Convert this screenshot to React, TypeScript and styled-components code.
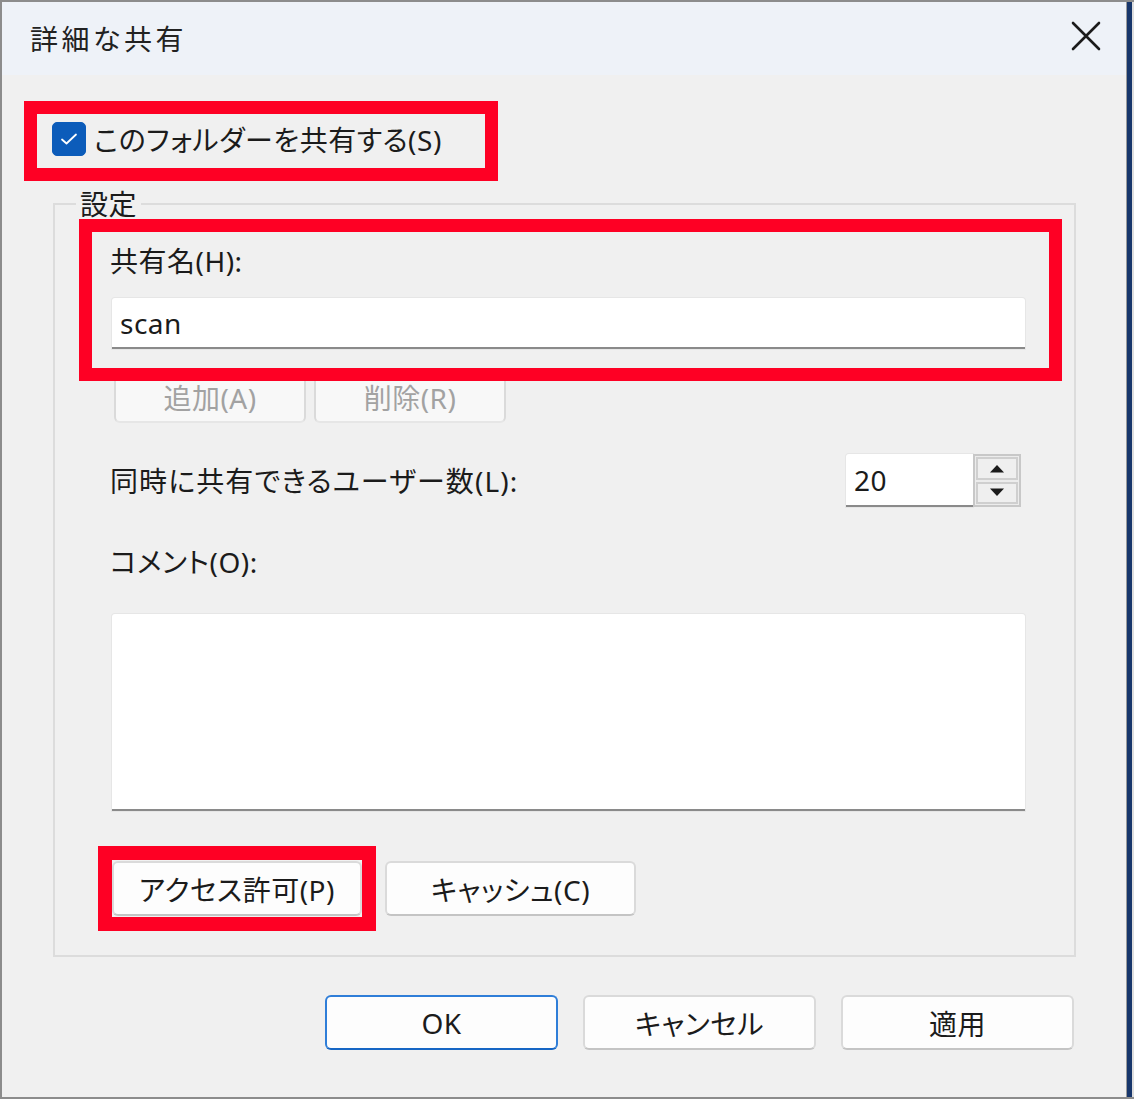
import React, { useState } from 'react';
import styled, { createGlobalStyle } from 'styled-components';

const GlobalStyle = createGlobalStyle`
  html, body {
    margin: 0;
    padding: 0;
    background: #f0f0f0;
  }

  body {
    font-family: "Noto Sans", "Noto Sans CJK JP", sans-serif;
    font-feature-settings: "palt";
    color: #1b1b1b;
  }
`;

const RED = '#fe0024';

const Window = styled.div`
  width: 1134px;
  height: 1099px;
  box-sizing: border-box;
  display: flex;
  border-top: 2px solid #8c8c8c;
  border-left: 2px solid #8c8c8c;
  border-bottom: 2px solid #8c8c8c;
  overflow: hidden;
`;

const Main = styled.div`
  flex: 1;
  display: flex;
  flex-direction: column;
  background: #f0f0f0;
`;

const Edge = styled.div`
  width: 8px;
  background: linear-gradient(to right, #9a9a9a 0 1px, #17366b 1px 6px, #dedede 6px);
`;

const TitleBar = styled.div`
  height: 73px;
  flex-shrink: 0;
  display: flex;
  align-items: center;
  justify-content: space-between;
  padding: 0 22px 0 28px;
  background: #eef2f8;
`;

const Title = styled.div`
  font-size: 28px;
  letter-spacing: 3.5px;
  color: #222;
  margin-top: -2px;
`;

const CloseButton = styled.button`
  width: 36px;
  height: 36px;
  border: none;
  background: transparent;
  padding: 0;
  display: flex;
  align-items: center;
  justify-content: center;
  margin-top: -6px;
`;

const Body = styled.div`
  flex: 1;
  padding: 26px 0 0 22px;
  display: flex;
  flex-direction: column;
  font-size: 28px;
  letter-spacing: 0.5px;
`;

const Highlight = styled.div<{ $thick?: number }>`
  position: relative;
  z-index: 1;
  border: ${(p) => p.$thick ?? 13}px solid ${RED};
  box-sizing: border-box;
`;

const CheckHighlight = styled(Highlight)`
  width: 474px;
  height: 80px;
  display: flex;
  align-items: center;
  padding: 0 0 4px 15px;
`;

const CheckRow = styled.label`
  display: flex;
  align-items: center;
  gap: 8px;
`;

const CheckBox = styled.span<{ $on: boolean }>`
  width: 34px;
  height: 34px;
  border-radius: 5px;
  box-sizing: border-box;
  background: ${(p) => (p.$on ? '#0c5cba' : '#fff')};
  border: 1px solid ${(p) => (p.$on ? '#0c5cba' : '#8a8a8a')};
  display: flex;
  align-items: center;
  justify-content: center;
`;

const Group = styled.fieldset`
  margin: 8px 0 0 29px;
  width: 1023px;
  box-sizing: border-box;
  border: 2px solid #dcdcdc;
  padding: 0;
  min-width: 0;
`;

const Legend = styled.legend`
  margin-left: 21px;
  padding: 0 4px;
  line-height: 30px;
`;

const GroupBody = styled.div`
  padding: 0 49px 24px 55px;
  display: flex;
  flex-direction: column;
`;

const NameHighlight = styled(Highlight)`
  margin: 0 -37px 0 -31px;
  padding: 11px 24px 19px 18px;
  display: flex;
  flex-direction: column;
`;

const Label = styled.div`
  line-height: 36px;
`;

const TextBox = styled.div<{ $height: number }>`
  height: ${(p) => p.$height}px;
  box-sizing: border-box;
  background: #fff;
  border-radius: 3px 3px 0 0;
  border-bottom: 2px solid #8a8a8a;
  box-shadow: 0 0 0 1px #e6e6e6;
  display: flex;
  align-items: center;
  padding: 0 8px;
`;

const NameInput = styled(TextBox)`
  margin-top: 19px;
  margin-left: 2px;
`;

const ButtonRow = styled.div<{ $top: number }>`
  display: flex;
  align-items: center;
  gap: 8px;
  margin-top: ${(p) => p.$top}px;
`;

const Button = styled.button<{ $w: number; $h?: number; $disabled?: boolean; $primary?: boolean }>`
  width: ${(p) => p.$w}px;
  height: ${(p) => p.$h ?? 55}px;
  box-sizing: border-box;
  border-radius: 6px;
  background: ${(p) => (p.$disabled ? '#f8f8f8' : '#fdfdfd')};
  border: ${(p) => (p.$primary ? '2px solid #2f7ed8' : '2px solid #dadada')};
  border-bottom-color: ${(p) => (p.$primary ? '#1666c4' : p.$disabled ? '#e6e6e6' : '#c4c4c4')};
  color: ${(p) => (p.$disabled ? '#a2a2a2' : '#1b1b1b')};
  font-family: inherit;
  font-feature-settings: "palt";
  font-size: 28px;
  letter-spacing: 0.5px;
  padding: 0;
`;

const UsersRow = styled.div`
  display: flex;
  align-items: center;
  justify-content: space-between;
  margin-top: 31px;
  padding-right: 4px;
`;

const UsersLabel = styled(Label)`
  letter-spacing: 1.1px;
`;

const Spin = styled.div`
  display: flex;
  height: 53px;
`;

const SpinInput = styled(TextBox)`
  width: 127px;
  border-radius: 3px 0 0 0;
`;

const SpinButtons = styled.div`
  width: 48px;
  box-sizing: border-box;
  border: 2px solid #c8c8c8;
  display: flex;
  flex-direction: column;
  gap: 2px;
  padding: 1px;
  background: #ececec;
`;

const SpinButton = styled.div`
  flex: 1;
  border: 2px solid #cfcfcf;
  background: #efefef;
  display: flex;
  align-items: center;
  justify-content: center;
`;

const CommentLabel = styled(Label)`
  margin-top: 37px;
`;

const CommentBox = styled(TextBox)`
  margin-top: 34px;
  margin-left: 2px;
`;

const AccessHighlight = styled(Highlight)`
  margin-left: -12px;
  padding: 1px 0;
`;

const Footer = styled.div`
  display: flex;
  justify-content: flex-end;
  gap: 25px;
  margin-top: 38px;
  padding-right: 52px;
`;

const Arrow = ({ up }: { up?: boolean }) => (
  <svg width="16" height="9" viewBox="0 0 16 9">
    <path d={up ? 'M1 8.5 L8 1 L15 8.5 Z' : 'M1 0.5 L8 8 L15 0.5 Z'} fill="#1b1b1b" />
  </svg>
);

export default function App() {
  const [shared, setShared] = useState(true);

  return (
    <>
      <GlobalStyle />
      <Window>
        <Main>
          <TitleBar>
            <Title>詳細な共有</Title>
            <CloseButton aria-label="閉じる">
              <svg width="30" height="30" viewBox="0 0 30 30">
                <path d="M2 2 L28 28 M28 2 L2 28" stroke="#1b1b1b" strokeWidth="2.6" strokeLinecap="round" />
              </svg>
            </CloseButton>
          </TitleBar>

          <Body>
            <CheckHighlight>
              <CheckRow onClick={() => setShared(!shared)}>
                <CheckBox $on={shared}>
                  {shared && (
                    <svg width="18" height="14" viewBox="0 0 18 14">
                      <path d="M2 7.5 L6.5 11.5 L16 2.5" stroke="#fff" strokeWidth="1.8" fill="none" strokeLinecap="round" strokeLinejoin="round" />
                    </svg>
                  )}
                </CheckBox>
                このフォルダーを共有する(S)
              </CheckRow>
            </CheckHighlight>

            <Group>
              <Legend>設定</Legend>
              <GroupBody>
                <NameHighlight>
                  <Label>共有名(H):</Label>
                  <NameInput $height={51}>scan</NameInput>
                </NameHighlight>

                <ButtonRow $top={-11}>
                  <Button $w={192} $h={53} $disabled style={{ marginLeft: 4 }}>追加(A)</Button>
                  <Button $w={192} $h={53} $disabled>削除(R)</Button>
                </ButtonRow>

                <UsersRow>
                  <UsersLabel>同時に共有できるユーザー数(L):</UsersLabel>
                  <Spin>
                    <SpinInput $height={53}>20</SpinInput>
                    <SpinButtons>
                      <SpinButton><Arrow up /></SpinButton>
                      <SpinButton><Arrow /></SpinButton>
                    </SpinButtons>
                  </Spin>
                </UsersRow>

                <CommentLabel>コメント(O):</CommentLabel>
                <CommentBox $height={197} />

                <ButtonRow $top={35}>
                  <AccessHighlight $thick={14}>
                    <Button $w={250}>アクセス許可(P)</Button>
                  </AccessHighlight>
                  <Button $w={251} style={{ marginLeft: 1 }}>キャッシュ(C)</Button>
                </ButtonRow>
              </GroupBody>
            </Group>

            <Footer>
              <Button $w={233} $primary>OK</Button>
              <Button $w={233}>キャンセル</Button>
              <Button $w={233}>適用</Button>
            </Footer>
          </Body>
        </Main>
        <Edge />
      </Window>
    </>
  );
}
